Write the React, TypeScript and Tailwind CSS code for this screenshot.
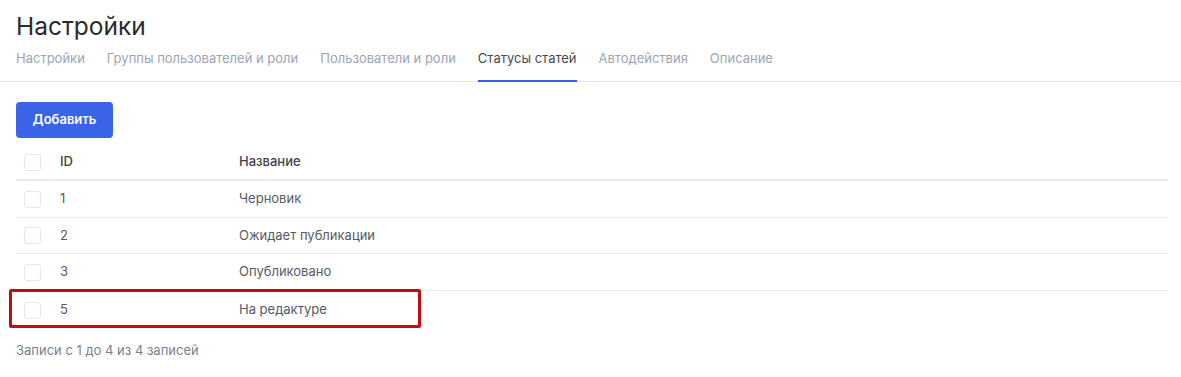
import React from "react";

const tabs = [
  "Настройки",
  "Группы пользователей и роли",
  "Пользователи и роли",
  "Статусы статей",
  "Автодействия",
  "Описание",
];

const rows = [
  { id: "1", name: "Черновик", h: "h-[37px]" },
  { id: "2", name: "Ожидает публикации", h: "h-[36px]" },
  { id: "3", name: "Опубликовано", h: "h-[37px]" },
  { id: "5", name: "На редактуре", h: "h-[37px]", highlight: true },
];

function Checkbox() {
  return <div className="w-[17px] h-[17px] rounded-[3px] border border-[#e4e6ef] bg-white shrink-0" />;
}

export default function App() {
  return (
    <div className="w-[1181px] h-[377px] bg-white overflow-hidden" style={{ fontFamily: "Inter, 'Noto Sans', sans-serif" }}>
      <div className="pl-4 pt-[10px]">
        <h1 className="text-[24.5px] leading-[32px] text-[#2b2b2b] font-normal">Настройки</h1>
      </div>
      <div className="mt-[6px] border-b border-[#e6e8ee] flex gap-[22px] pl-4">
        {tabs.map((t, i) => (
          <div
            key={t}
            className={
              "text-[13px] leading-[20px] pb-[12px] border-b-[2px] -mb-px " +
              (i === 3 ? "text-[#4a4a4a] border-[#3561e8]" : "text-[#9aa5b5] border-transparent")
            }
          >
            {t}
          </div>
        ))}
      </div>
      <div className="pl-4 pr-[13px] pt-[20px]">
        <button className="h-[36px] w-[97px] rounded-[4px] bg-[#3b63e8] text-white text-[13px] font-semibold">
          Добавить
        </button>
        <div className="mt-[7px]">
          <div className="flex items-center h-[36px] pl-2 border-b-[2px] border-[#e6e9ee] text-[13px] text-[#3f3f46] font-medium">
            <Checkbox />
            <div className="ml-[19px] w-[179px]">ID</div>
            <div>Название</div>
          </div>
          {rows.map((r, i) => (
            <div
              key={r.id}
              className={
                "relative flex items-center pl-2 text-[13px] text-[#555b66] " +
                r.h +
                (i < rows.length - 1 ? " border-b border-[#e9ebef]" : " pt-[1px]")
              }
            >
              <Checkbox />
              <div className="ml-[19px] w-[179px]">{r.id}</div>
              <div>{r.name}</div>
              {r.highlight && (
                <div className="absolute left-[-7px] top-[-2px] w-[412px] h-[39px] border-[3px] border-[#c00d0d] rounded-[2px]" />
              )}
            </div>
          ))}
        </div>
        <div className="mt-[13px] text-[13px] text-[#7a7f88]">Записи с 1 до 4 из 4 записей</div>
      </div>
    </div>
  );
}
